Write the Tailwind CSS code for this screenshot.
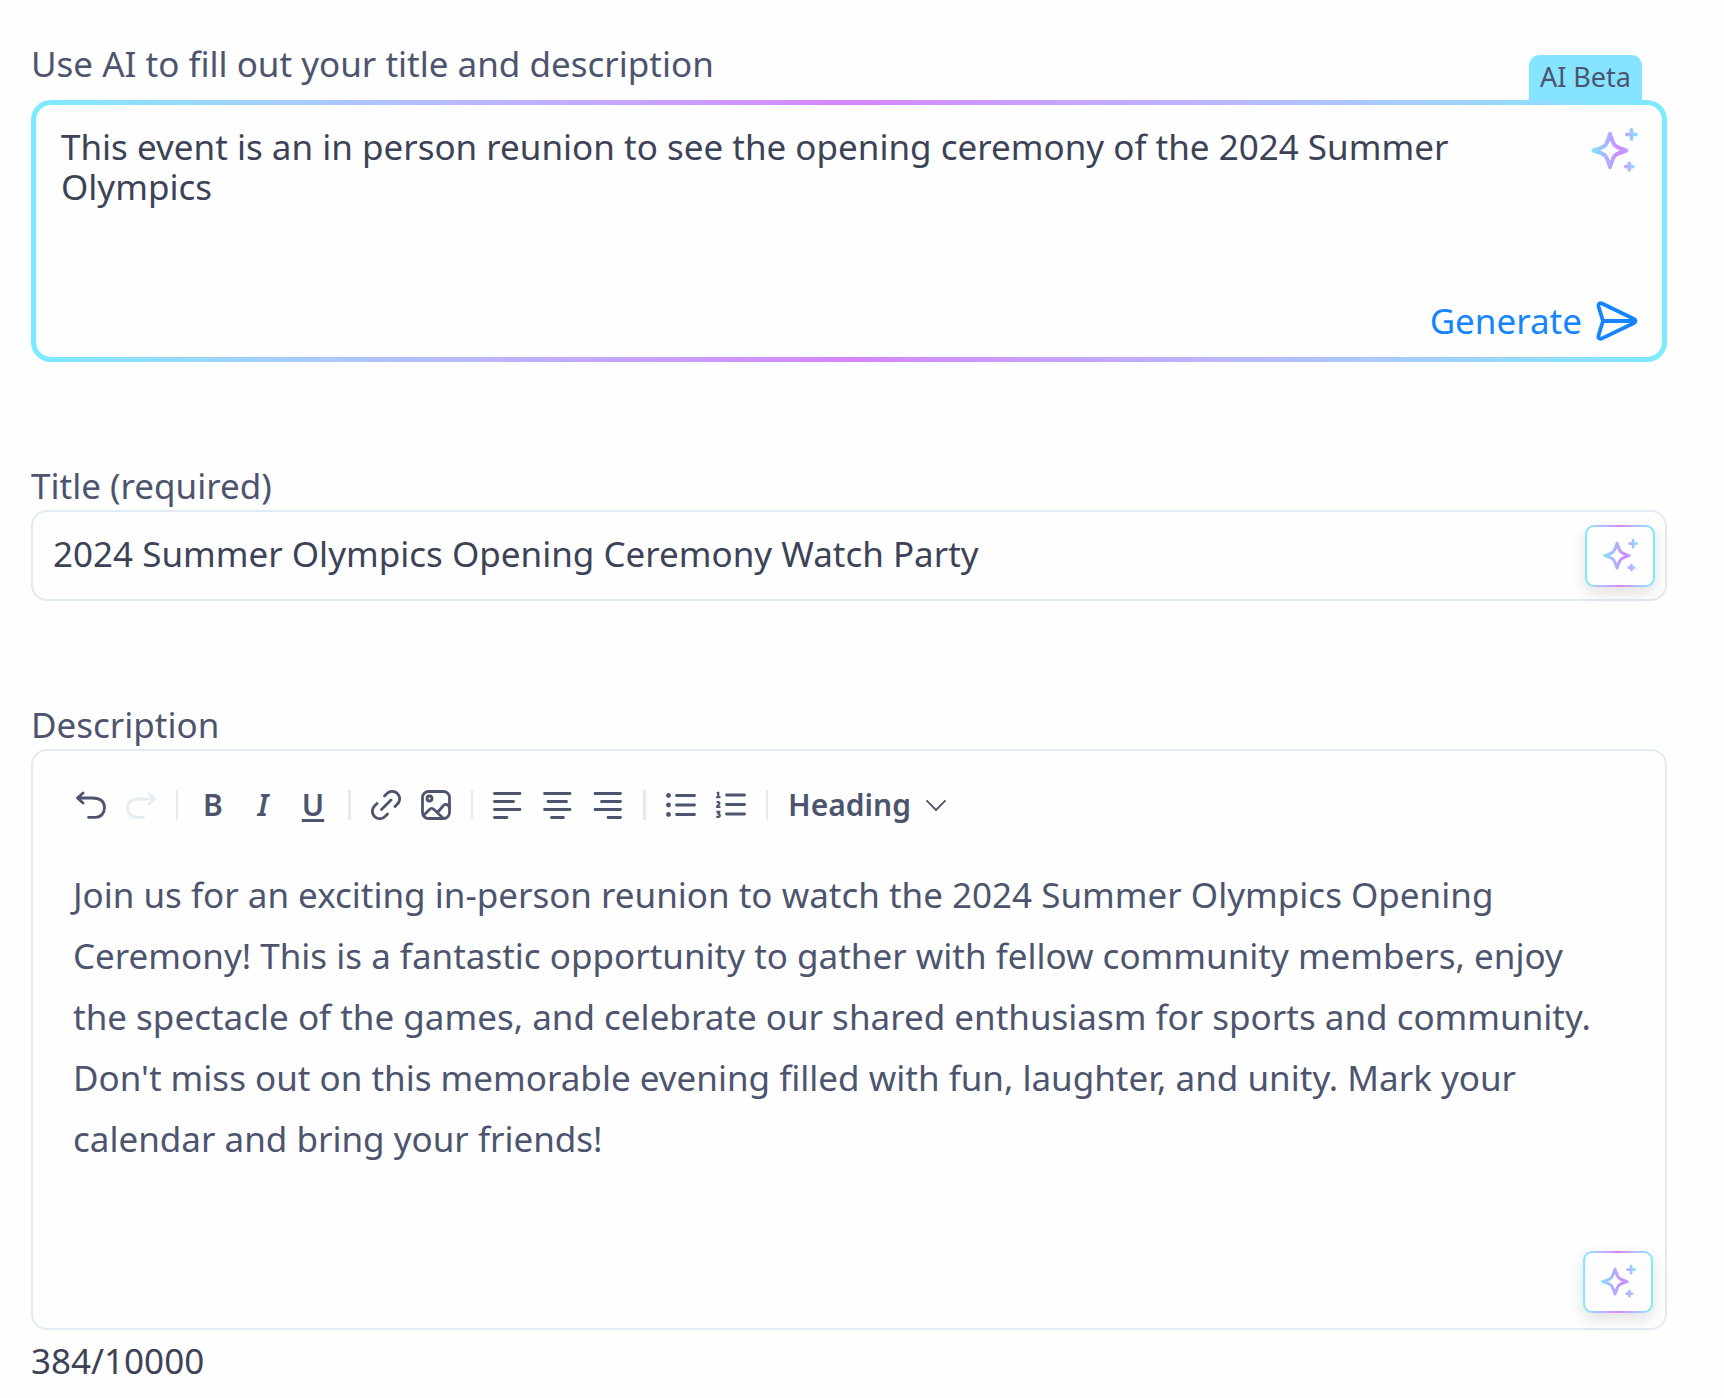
<!DOCTYPE html>
<html lang="en">
<head>
    <meta charset="UTF-8">
    <meta name="viewport" content="width=device-width, initial-scale=1.0">
    <title>Create event</title>
    <script src="https://cdn.jsdelivr.net/npm/@tailwindcss/browser@4"></script>
</head>
<body class="bg-[#fefefe] font-['Noto_Sans',sans-serif] text-[35px] leading-[48px] text-[#4d556e]">
    <!-- Shared icon artwork -->
    <svg class="absolute size-0" aria-hidden="true">
        <defs>
            <linearGradient id="sparkleGradient" gradientUnits="userSpaceOnUse" x1="0" y1="0" x2="48" y2="0">
                <stop offset="0" stop-color="#7aebff"/>
                <stop offset="0.65" stop-color="#d585ff"/>
                <stop offset="0.8" stop-color="#b0b5ff"/>
                <stop offset="1" stop-color="#7aebff"/>
            </linearGradient>
            <symbol id="sparkle" viewBox="0 0 48 48">
                <g fill="none" stroke="url(#sparkleGradient)" stroke-width="4" stroke-linecap="round" stroke-linejoin="round">
                    <path d="M20 7C21.600 11.500 22.400 15.500 25 18.500C28 21.100 32 21.900 36.500 23.500C32 25.100 28 25.900 25 28.500C22.400 31.500 21.600 35.500 20 40C18.400 35.500 17.600 31.500 15 28.500C12 25.900 8 25.100 3.500 23.500C8 21.900 12 21.100 15 18.500C17.600 15.500 18.400 11.500 20 7Z"/>
                    <path stroke-width="3.6" d="M41.500 2.800V12.200M36.800 7.500H46.200M39.300 36.200V43M35.800 39.600H42.800"/>
                </g>
            </symbol>
        </defs>
    </svg>

    <form class="flex flex-col pt-[39px] pr-[57px] pb-2 pl-[31px]">
        <!-- AI prompt -->
        <section class="relative">
            <label for="prompt" class="block h-[61px] leading-[50px]">Use AI to fill out your title and description</label>
            <span class="absolute top-4 right-[25px] h-[46px] rounded-t-[10px] bg-[#85e4ff] px-[11px] text-[27px] leading-[44px]">AI Beta</span>
            <div class="relative rounded-[20px] bg-linear-to-r from-[#7aebff] via-[#d585ff] to-[#7aebff] p-[5px]">
                <div class="flex h-[252px] rounded-[15px] bg-[#fefefe]">
                    <textarea id="prompt" class="flex-1 resize-none pt-[22px] pl-[25px] leading-[40px] text-[#3d4357] outline-none">This event is an in person reunion to see the opening ceremony of the 2024 Summer Olympics</textarea>
                    <div class="flex w-[100px] flex-col items-end pt-[22px] pr-6">
                        <svg class="size-12" aria-hidden="true"><use href="#sparkle"/></svg>
                    </div>
                </div>
                <button type="button" class="absolute right-[28px] bottom-[17px] flex items-center gap-[13px] text-[#1585ff]">
                    Generate
                    <svg class="size-[44px]" viewBox="0 0 44 44" fill="none" stroke="currentColor" stroke-width="3.800" stroke-linecap="round" stroke-linejoin="round" aria-hidden="true">
                        <path d="M8 22H40M8 22L3.500 7.500C2.800 5.200 4.800 3.600 7 4.600L39 20C41 21 41 23 39 24L7 39.400C4.800 40.400 2.800 38.800 3.500 36.500Z"/>
                    </svg>
                </button>
            </div>
        </section>

        <!-- Title -->
        <section class="mt-[99px]">
            <label for="title" class="block h-[49px] leading-[50px]">Title (required)</label>
            <div class="relative rounded-2xl border-2 border-[#e1ebf3] pt-[18px] pr-24 pb-6 pl-5">
                <div class="h-[45px] overflow-hidden">
                    <input id="title" type="text" value="2024 Summer Olympics Opening Ceremony Watch Party" class="block w-full text-[#3d4357] outline-none">
                </div>
                <button type="button" aria-label="Rewrite title" class="absolute top-[13px] right-[10px] h-[62px] w-[70px] rounded-[9px] bg-linear-to-r from-[#7aebff] via-[#d585ff] to-[#7aebff] p-[2px] shadow-[0_6px_16px_rgba(0,0,0,0.12)]">
                    <span class="flex size-full items-center justify-center rounded-[7px] bg-[#fefefe]">
                        <svg class="size-9" aria-hidden="true"><use href="#sparkle"/></svg>
                    </span>
                </button>
            </div>
        </section>

        <!-- Description editor -->
        <section class="mt-[99px]">
            <div id="descriptionLabel" class="h-[49px] leading-[50px]">Description</div>
            <div class="relative h-[581px] rounded-2xl border-2 border-[#e1ebf3] px-[40px]">
                <div class="flex h-[108px] items-center gap-5 pl-[3px] text-[30px] leading-[30px] font-semibold" role="toolbar" aria-label="Formatting">
                    <button type="button" aria-label="Undo" class="size-[30px]">
                        <svg viewBox="0 0 30 30" fill="none" stroke="currentColor" stroke-width="2.800" stroke-linecap="round" stroke-linejoin="round"><path d="M7 3L1.500 8L7 13M1.500 8H16C25 8 28.500 12 28.500 17.500C28.500 23 25 27.300 19.500 27.300H12.500"/></svg>
                    </button>
                    <button type="button" aria-label="Redo" class="size-[30px] text-[#e4edf4]" disabled>
                        <svg viewBox="0 0 30 30" fill="none" stroke="currentColor" stroke-width="2.800" stroke-linecap="round" stroke-linejoin="round"><path d="M23 4L28.500 9L23 14M28.500 9H14C5 9 1.500 12.500 1.500 18C1.500 23 5 27.300 10.500 27.300H17.500"/></svg>
                    </button>
                    <span class="h-[30px] w-[2px] bg-[#e1ebf3]"></span>
                    <button type="button" aria-label="Bold" class="size-[30px]">B</button>
                    <button type="button" aria-label="Italic" class="size-[30px] italic">I</button>
                    <button type="button" aria-label="Underline" class="size-[30px] underline decoration-[3px] underline-offset-[3px]">U</button>
                    <span class="h-[30px] w-[3px] bg-[#e1ebf3]"></span>
                    <button type="button" aria-label="Link" class="size-[30px]">
                        <svg viewBox="0 0 30 30" fill="none" stroke="currentColor" stroke-width="2.800" stroke-linecap="round" stroke-linejoin="round"><path d="M10.500 19.500L20 10M13.500 6L16 3.500C19 .6 23.500 .6 26.400 3.500C29.400 6.500 29.400 11 26.400 14L24 16.500M6 13.500L3.500 16C.6 19 .6 23.500 3.500 26.400C6.500 29.400 11 29.400 14 26.400L16.500 24"/></svg>
                    </button>
                    <button type="button" aria-label="Image" class="size-[30px]">
                        <svg viewBox="0 0 30 30" fill="none" stroke="currentColor" stroke-width="2.800" stroke-linecap="round" stroke-linejoin="round"><rect x="1.500" y="1.500" width="27" height="27" rx="6"/><circle cx="8.500" cy="8.500" r="2.500"/><path d="M2.500 25.500L8.500 19.500C10 18 11.500 18 13 19.500L22 28M16.500 22.500L22 16C23.500 14 25.500 14 27 15.500L28.500 17"/></svg>
                    </button>
                    <span class="h-[30px] w-[2px] bg-[#e1ebf3]"></span>
                    <button type="button" aria-label="Align left" class="size-[30px]">
                        <svg viewBox="0 0 30 30" stroke="currentColor" stroke-width="2.800" stroke-linecap="round"><path d="M1.500 3.500H27M1.500 11.500H20.500M1.500 19.500H27M1.500 27.500H14"/></svg>
                    </button>
                    <button type="button" aria-label="Align center" class="size-[30px]">
                        <svg viewBox="0 0 30 30" stroke="currentColor" stroke-width="2.800" stroke-linecap="round"><path d="M1.500 3.500H27M5 11.500H23.500M1.500 19.500H27M8.500 27.500H20.500"/></svg>
                    </button>
                    <button type="button" aria-label="Align right" class="size-[30px]">
                        <svg viewBox="0 0 30 30" stroke="currentColor" stroke-width="2.800" stroke-linecap="round"><path d="M2 3.500H27.500M8.500 11.500H27.500M2 19.500H27.500M15 27.500H27.500"/></svg>
                    </button>
                    <span class="h-[30px] w-[3px] bg-[#e1ebf3]"></span>
                    <button type="button" aria-label="Bulleted list" class="size-[30px]">
                        <svg viewBox="0 0 30 30" fill="currentColor" stroke="currentColor" stroke-width="2.800" stroke-linecap="round"><path d="M10.500 5.500H28.500M10.500 15H28.500M10.500 24.500H28.500"/><g stroke="none"><circle cx="2.500" cy="5.500" r="2.400"/><circle cx="2.500" cy="15" r="2.400"/><circle cx="2.500" cy="24.500" r="2.400"/></g></svg>
                    </button>
                    <button type="button" aria-label="Numbered list" class="size-[30px]">
                        <svg viewBox="0 0 30 30" fill="none" stroke="currentColor" stroke-width="2.800" stroke-linecap="round"><path d="M10.500 5H28.500M10.500 14.500H28.500M10.500 24H28.500"/><path stroke-width="2.100" stroke-linecap="butt" stroke-linejoin="round" d="M.8 3.200L2.300 2.600V7.300M.1 7.300H4.500M.7 12.600C1.300 11.700 3.500 11.700 3.500 13.200C3.500 14.400 1.800 15.400 .9 17H4.500M.4 21.700H3.500L2.200 23.700C4.600 23.900 4.300 26.900 2.200 26.900C1.400 26.900 .9 26.700 .4 26.400"/></svg>
                    </button>
                    <span class="h-[30px] w-[2px] bg-[#e1ebf3]"></span>
                    <button type="button" class="flex items-center gap-[15px]">
                        Heading
                        <svg class="w-5" viewBox="0 0 20 11" fill="none" stroke="currentColor" stroke-width="1.800" stroke-linecap="round" stroke-linejoin="round" aria-hidden="true"><path d="M1 .9L10 10L19 .9"/></svg>
                    </button>
                </div>
                <div contenteditable="true" role="textbox" aria-multiline="true" aria-labelledby="descriptionLabel" class="pt-[5px] leading-[61px] outline-none">Join us for an exciting in-person reunion to watch the 2024 Summer Olympics Opening Ceremony! This is a fantastic opportunity to gather with fellow community members, enjoy the spectacle of the games, and celebrate our shared enthusiasm for sports and community. Don't miss out on this memorable evening filled with fun, laughter, and unity. Mark your calendar and bring your friends!</div>
                <button type="button" aria-label="Rewrite description" class="absolute right-3 bottom-[15px] h-[62px] w-[70px] rounded-[9px] bg-linear-to-r from-[#7aebff] via-[#d585ff] to-[#7aebff] p-[2px] shadow-[0_6px_16px_rgba(0,0,0,0.12)]">
                    <span class="flex size-full items-center justify-center rounded-[7px] bg-[#fefefe]">
                        <svg class="size-9" aria-hidden="true"><use href="#sparkle"/></svg>
                    </span>
                </button>
            </div>
            <p class="mt-[7px] text-[#3d4357]">384/10000</p>
        </section>
    </form>
</body>
</html>
